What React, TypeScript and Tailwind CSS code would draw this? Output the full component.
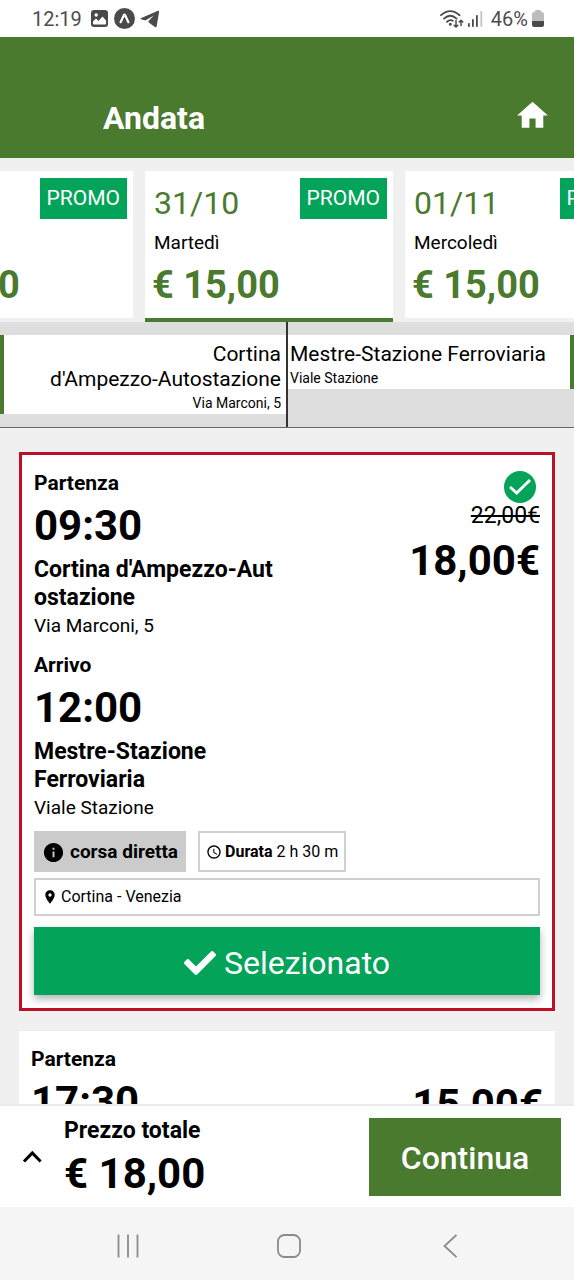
import type { ReactNode } from 'react';
import { FaCheck } from 'react-icons/fa';
import { MdHome, MdInfo, MdLocationOn, MdAccessTime } from 'react-icons/md';

interface DayFare {
  date: string;
  day: string;
  price: string;
  selected?: boolean;
}

interface StopInfo {
  label: string;
  time: string;
  name: string;
  address: string;
}

interface Ride {
  id: number;
  stops: StopInfo[];
  price: string;
  oldPrice?: string;
  duration: string;
  route: string;
  selected?: boolean;
}

const DAYS: DayFare[] = [
  { date: '30/10', day: 'Lunedì', price: '€ 15,00' },
  { date: '31/10', day: 'Martedì', price: '€ 15,00', selected: true },
  { date: '01/11', day: 'Mercoledì', price: '€ 15,00' },
];

const RIDES: Ride[] = [
  {
    id: 1,
    stops: [
      { label: 'Partenza', time: '09:30', name: "Cortina d'Ampezzo-Aut\nostazione", address: 'Via Marconi, 5' },
      { label: 'Arrivo', time: '12:00', name: 'Mestre-Stazione\nFerroviaria', address: 'Viale Stazione' },
    ],
    price: '18,00€',
    oldPrice: '22,00€',
    duration: '2 h 30 m',
    route: 'Cortina - Venezia',
    selected: true,
  },
  {
    id: 2,
    stops: [{ label: 'Partenza', time: '17:30', name: '', address: '' }],
    price: '15,00€',
    duration: '',
    route: '',
  },
];

function StatusBar() {
  return (
    <div className="flex h-[37px] shrink-0 items-center justify-between bg-white pl-8 pr-[30px] text-[20px] leading-6 text-[#4d4d4d]">
      <div className="flex items-center">
        <span>12:19</span>
        {/* gallery */}
        <svg className="ml-[9px] h-[17px] w-[17px]" viewBox="0 0 17 17">
          <rect width="17" height="17" rx="3" fill="#4a4a4a" />
          <circle cx="5.2" cy="5" r="1.7" fill="#fff" />
          <path d="M2 11.5 5 8.5 7.5 11 11.5 6.5 15 10.5V13.5Q15 14.5 14 14.5H3Q2 14.5 2 13.5Z" fill="#fff" />
        </svg>
        {/* expo */}
        <svg className="ml-[6px] h-[21px] w-[21px]" viewBox="0 0 21 21">
          <circle cx="10.5" cy="10.5" r="10.5" fill="#4a4a4a" />
          <path d="M6.6 14.2 9.8 7.2Q10.5 6 11.2 7.2L14.4 14.2" fill="none" stroke="#fff" strokeWidth="2.2" strokeLinecap="round" />
        </svg>
        {/* telegram */}
        <svg className="ml-[5px] h-[18px] w-5" viewBox="0 0 20 18">
          <path d="M.8 8.2 18 .8Q19.3.4 19.1 1.8L16.7 16.2Q16.3 17.8 14.9 16.900L8.800 12.400Q8 11.600 8.800 10.700L13.800 5.600 6.200 10.100Q5.400 10.500 4.600 10.300L1 9.300Q0 8.800.8 8.200Z" fill="#4a4a4a" />
        </svg>
      </div>
      <div className="flex items-center">
        <svg className="h-[18px] w-6" viewBox="0 0 24 18" fill="none" stroke="#4a4a4a" strokeWidth="1.8" strokeLinecap="round">
          <path d="M1 5.2Q10.200-3 19.600 5.200M4 8.600Q10.300 3 16.600 8.600M7 11.800Q10.300 9 12.800 10.800" />
          <circle cx="10.300" cy="14.200" r=".6" fill="#4a4a4a" />
          <path d="M16 10.500V16.800M14.200 15.200 16 17 17.800 15.200M21 15.500V10.500M19.200 12 21 10.200 22.800 12" strokeWidth="1.5" />
        </svg>
        <svg className="ml-1 h-4 w-[15px]" viewBox="0 0 15 16" fill="#4a4a4a">
          <rect x="0" y="12" width="1.800" height="4" rx=".8" />
          <rect x="4" y="8" width="1.800" height="8" rx=".8" />
          <rect x="8" y="4" width="1.800" height="12" rx=".8" />
          <rect x="12.400" y="0" width="1.800" height="16" rx=".8" fill="#c4c4c4" />
        </svg>
        <span className="ml-2">46%</span>
        <svg className="ml-1 h-[17px] w-3" viewBox="0 0 12 17">
          <path d="M3 2V1Q3 0 4 0H8Q9 0 9 1V2H10Q12 2 12 4V12H0V4Q0 2 2 2Z" fill="#bdbdbd" />
          <path d="M0 11H12V15Q12 17 10 17H2Q0 17 0 15Z" fill="#4a4a4a" />
        </svg>
      </div>
    </div>
  );
}

function DayCard({ date, day, price, selected }: DayFare) {
  return (
    <button
      className={`flex w-[248px] shrink-0 flex-col border-b-4 bg-white pt-[7px] text-left ${
        selected ? 'border-[#4a7a2e]' : 'border-[#f0f0f0]'
      }`}
    >
      <span className="flex h-[45px] w-full items-start justify-between pl-[9px] pr-[6px]">
        <span className="self-end text-[32px] leading-10 text-[#4a7a2e]">{date}</span>
        <span className="bg-[#03a35a] px-[7px] text-[21px] leading-[41px] text-white">PROMO</span>
      </span>
      <span className="mt-[6px] pl-[9px] text-[19px] leading-7 text-black">{day}</span>
      <span className="mt-[6px] pb-[11px] pl-[7px] text-[38px] font-bold leading-[44px] text-[#4a7a2e]">{price}</span>
    </button>
  );
}

function Stop({ label, time, name, address }: StopInfo) {
  return (
    <div>
      <p className="text-[21px] font-bold leading-[26px]">{label}</p>
      <p className="mt-2 text-[42px] font-bold leading-[44px]">{time}</p>
      <p className="mt-2 whitespace-pre-line text-[23px] font-bold leading-7">{name}</p>
      <p className="text-[19px] leading-7">{address}</p>
    </div>
  );
}

function RideCard({ ride, children }: { ride: Ride; children?: ReactNode }) {
  return (
    <article
      className={`bg-white px-3 pt-[15px] pb-[13px] text-black ${ride.selected ? 'border-[3px] border-[#bd0f27]' : ''}`}
    >
      <div className="flex justify-between">
        <div className="flex flex-col gap-3">
          {ride.stops.map((s) => (
            <Stop key={s.label} {...s} />
          ))}
        </div>
        <div className="flex flex-col items-end">
          {ride.selected && (
            <svg className="mr-1 mt-px h-8 w-8" viewBox="0 0 32 32">
              <circle cx="16" cy="16" r="16" fill="#03a35a" />
              <path d="M6 16 12.700 22 26 9" fill="none" stroke="#fff" strokeWidth="3" />
            </svg>
          )}
          {ride.oldPrice && <s className="text-[23px] leading-[26px]">{ride.oldPrice}</s>}
          <p className={`text-[42px] font-bold leading-[44px] ${ride.oldPrice ? 'mt-[10px]' : 'mt-[37px]'}`}>{ride.price}</p>
        </div>
      </div>
      {children}
    </article>
  );
}

function RideDetails({ ride }: { ride: Ride }) {
  return (
    <>
      <div className="mt-[9px] flex gap-3">
        <span className="flex h-[41px] items-center gap-[5px] bg-[#cbcbcb] px-2 pt-px text-[19px] font-bold">
          <MdInfo size={23} />
          corsa diretta
        </span>
        <span className="flex h-[41px] items-center gap-[3px] border-2 border-[#d0d0d0] px-[6px] text-[16px]">
          <MdAccessTime size={16} />
          <span>
            <b>Durata</b> {ride.duration}
          </span>
        </span>
      </div>
      <div className="mt-[6px] flex h-[38px] items-center gap-[3px] border-2 border-[#d0d0d0] px-[6px] text-[16px]">
        <MdLocationOn size={16} />
        {ride.route}
      </div>
      <button className="mt-[11px] flex h-[68px] w-full items-center justify-center gap-2 bg-[#03a35a] pt-1 text-[32px] text-white shadow-[0_4px_8px_rgba(0,0,0,0.3)]">
        <FaCheck size={32} />
        Selezionato
      </button>
    </>
  );
}

export default function App() {
  return (
    <div className="flex h-screen flex-col overflow-hidden bg-[#f0f0f0] font-['Roboto',sans-serif]">
      <StatusBar />

      <header className="flex h-[121px] shrink-0 items-end justify-between bg-[#4a7a2e] pb-5 pl-[103px] pr-[23px] text-white">
        <h1 className="text-[32px] font-bold leading-10">Andata</h1>
        <a href="#home" aria-label="Home" className="pb-1">
          <MdHome size={37} />
        </a>
      </header>

      <main className="min-h-0 flex-1 overflow-hidden">
        {/* Days */}
        <div className="flex justify-center gap-3 overflow-hidden pr-9 pt-[13px]">
          {DAYS.map((d) => (
            <DayCard key={d.date} {...d} />
          ))}
        </div>

        {/* From / to */}
        <section className="grid h-[106px] grid-cols-2 border-b border-[#666] bg-[#dedede] text-black">
          <div className="border-r border-[#333] pt-[13px]">
            <div className="border-l-4 border-[#4a7a2e] bg-white pr-[5px] pt-[7px] text-right">
              <p className="text-[21px] leading-[25px]">
                Cortina
                <br />
                d'Ampezzo-Autostazione
              </p>
              <p className="text-[14px] leading-[22px]">Via Marconi, 5</p>
            </div>
          </div>
          <div className="border-l border-[#333] pt-[13px]">
            <div className="border-r-4 border-[#4a7a2e] bg-white pl-[2px] pt-[7px]">
              <p className="text-[21px] leading-[25px]">Mestre-Stazione Ferroviaria</p>
              <p className="text-[14px] leading-[22px]">Viale Stazione</p>
            </div>
          </div>
        </section>

        {/* Rides */}
        <section className="flex flex-col gap-5 px-[19px] pt-6">
          {RIDES.map((r) => (
            <RideCard key={r.id} ride={r}>
              {r.selected && <RideDetails ride={r} />}
            </RideCard>
          ))}
        </section>
      </main>

      <footer className="flex h-[103px] shrink-0 items-center border-t-2 border-[#ebebeb] bg-white pl-[22px] pr-[13px] text-black">
        <button aria-label="Dettagli prezzo">
          <svg className="h-[15px] w-5" viewBox="0 0 20 15" fill="none" stroke="#000" strokeWidth="3">
            <path d="M2 12.500 10.300 4 18.600 12.500" />
          </svg>
        </button>
        <div className="ml-[22px] flex-1">
          <p className="text-[23px] font-bold leading-[26px]">Prezzo totale</p>
          <p className="mt-2 text-[42px] font-bold leading-[44px]">€ 18,00</p>
        </div>
        <button className="h-[78px] w-48 bg-[#4a7a2e] pt-[2px] text-[32px] font-medium text-white">Continua</button>
      </footer>

      <nav className="grid h-[73px] shrink-0 grid-cols-3 place-items-center bg-[#f5f5f5] pl-12 pr-11 pt-1">
        <button aria-label="App recenti">
          <svg className="h-6 w-6" viewBox="0 0 24 24" fill="none" stroke="#8a8a8a" strokeWidth="1.800">
            <path d="M2.500.5V23.500M12 .5V23.500M21.500.5V23.500" />
          </svg>
        </button>
        <button aria-label="Schermata Home">
          <svg className="h-6 w-6" viewBox="0 0 24 24" fill="none" stroke="#8a8a8a" strokeWidth="1.800">
            <rect x="1" y="1" width="22" height="22" rx="6.500" />
          </svg>
        </button>
        <button aria-label="Indietro">
          <svg className="h-6 w-6" viewBox="0 0 24 24" fill="none" stroke="#8a8a8a" strokeWidth="1.800">
            <path d="M18.500.8 6.500 12 18.500 23.200" />
          </svg>
        </button>
      </nav>
    </div>
  );
}
